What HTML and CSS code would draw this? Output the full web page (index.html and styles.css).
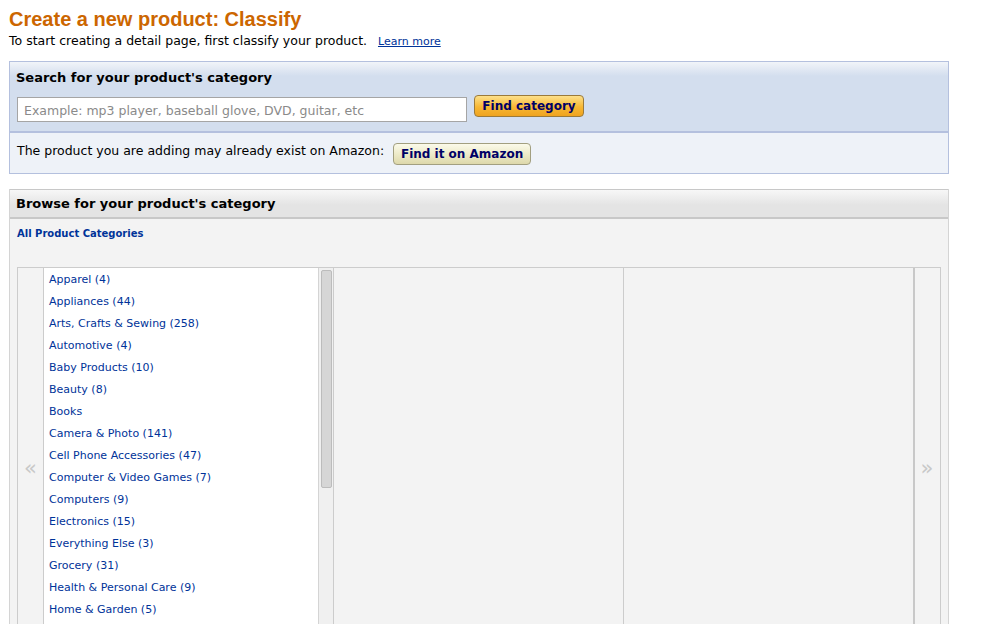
FILE: index.html
```html
<!DOCTYPE html>
<html lang="en">
<head>
    <meta charset="UTF-8">
    <title>Create a new product: Classify</title>
    <link rel="stylesheet" href="styles.css">
</head>
<body>
    <header class="page-head">
        <h1>Create a new product: Classify</h1>
        <p class="intro">To start creating a detail page, first classify your product. <a href="#" class="learn-more">Learn more</a></p>
    </header>

    <!-- Search panel -->
    <section class="search-box">
        <div class="search-top">
            <h2>Search for your product's category</h2>
            <form class="search-row">
                <input type="text" class="search-input" placeholder="Example: mp3 player, baseball glove, DVD, guitar, etc">
                <button type="button" class="btn btn-orange">Find category</button>
            </form>
        </div>
        <div class="search-bottom">
            <span>The product you are adding may already exist on Amazon:</span>
            <button type="button" class="btn btn-beige">Find it on Amazon</button>
        </div>
    </section>

    <!-- Browse panel -->
    <section class="browse-box">
        <div class="browse-head">
            <h2>Browse for your product's category</h2>
        </div>
        <div class="browse-body">
            <a href="#" class="all-link">All Product Categories</a>

            <div class="columns">
                <div class="arrow">&laquo;</div>
                <div class="column column-first">
                    <ul class="cat-list">
                        <li><a href="#">Apparel (4)</a></li>
                        <li><a href="#">Appliances (44)</a></li>
                        <li><a href="#">Arts, Crafts &amp; Sewing (258)</a></li>
                        <li><a href="#">Automotive (4)</a></li>
                        <li><a href="#">Baby Products (10)</a></li>
                        <li><a href="#">Beauty (8)</a></li>
                        <li><a href="#">Books</a></li>
                        <li><a href="#">Camera &amp; Photo (141)</a></li>
                        <li><a href="#">Cell Phone Accessories (47)</a></li>
                        <li><a href="#">Computer &amp; Video Games (7)</a></li>
                        <li><a href="#">Computers (9)</a></li>
                        <li><a href="#">Electronics (15)</a></li>
                        <li><a href="#">Everything Else (3)</a></li>
                        <li><a href="#">Grocery (31)</a></li>
                        <li><a href="#">Health &amp; Personal Care (9)</a></li>
                        <li><a href="#">Home &amp; Garden (5)</a></li>
                    </ul>
                    <div class="scrollbar"><div class="thumb"></div></div>
                </div>
                <div class="column"></div>
                <div class="column column-last"></div>
                <div class="arrow arrow-right">&raquo;</div>
            </div>
        </div>
    </section>
</body>
</html>
```

FILE: styles.css
```css
/* Reset */
html {
    overflow: hidden;
}

body, h1, h2, p, ul {
    margin: 0;
    padding: 0;
}

body {
    font-family: "DejaVu Sans", Verdana, sans-serif;
    color: #000;
    background-color: #fff;
    padding: 8px 45px 0 9px;
}

a {
    color: #003399;
    text-decoration: none;
}

/* Page heading */
.page-head h1 {
    font-family: "Liberation Sans", Arial, sans-serif;
    font-size: 20px;
    line-height: 22px;
    color: #cc6600;
}

.intro {
    font-size: 12.5px;
    line-height: 16px;
    margin-top: 3px;
    margin-bottom: 11px;
}

.learn-more {
    font-size: 11px;
    margin-left: 7px;
    text-decoration: underline;
}

/* Search panel */
.search-box {
    border: 1px solid #b4c0de;
    margin-bottom: 15px;
}

.search-top {
    background: linear-gradient(#f1f4f9 0, #d3deee 14px, #d3deee 100%);
    border-bottom: 2px solid #b4c0de;
    padding: 8px 7px 7px 6px;
    height: 54px;
}

.search-top h2,
.browse-head h2 {
    font-size: 13px;
    line-height: 16px;
}

.search-row {
    display: flex;
    align-items: flex-start;
    margin-top: 9px;
}

.search-input {
    width: 450px;
    height: 25px;
    box-sizing: border-box;
    border: 1px solid #a5a5a5;
    font-family: Tahoma, "DejaVu Sans", sans-serif;
    font-size: 12.5px;
    padding: 2px 6px 0;
    margin: 2px 7px 0 1px;
}

.search-input::placeholder {
    color: #8a8a8a;
}

.btn {
    font-family: "DejaVu Sans", Verdana, sans-serif;
    font-weight: bold;
    font-size: 12px;
    color: #000066;
    border-radius: 4px;
    height: 22px;
    padding: 0;
    white-space: nowrap;
    cursor: pointer;
}

.btn-orange {
    background: linear-gradient(#fde08a, #f7b733 55%, #efa31f);
    border: 1px solid #9b7a3a;
    width: 110px;
}

.btn-beige {
    background: linear-gradient(#fbfaea, #ece9c6 55%, #ddd8ab);
    border: 1px solid #a29f80;
    width: 138px;
}

.search-bottom {
    display: flex;
    align-items: flex-start;
    background-color: #eef2f8;
    padding: 9px 7px 8px 7px;
    height: 23px;
    font-size: 12.5px;
}

.search-bottom span {
    line-height: 18px;
    margin-right: 9px;
}

.search-bottom .btn {
    margin-top: 1px;
}

/* Browse panel */
.browse-box {
    border: 1px solid #d4d4d4;
    border-bottom: none;
}

.browse-head {
    background: linear-gradient(#f7f7f7 0, #e4e4e4 15px, #e4e4e4 100%);
    border-top: 1px solid #c8c8c8;
    border-bottom: 2px solid #c8c8c8;
    margin-top: -1px;
    padding: 6px 6px 5px;
}

.browse-body {
    background-color: #f3f3f3;
    padding: 8px 7px 0 7px;
}

.all-link {
    display: block;
    font-size: 10px;
    font-weight: bold;
    line-height: 14px;
    margin-bottom: 26px;
}

.columns {
    display: flex;
    height: 404px;
    border: 1px solid #cccccc;
    border-bottom: none;
}

.arrow {
    width: 25px;
    border-right: 1px solid #cccccc;
    display: flex;
    align-items: center;
    justify-content: center;
    font-size: 21px;
    color: #c8c8c8;
    padding-bottom: 4px;
}

.arrow-right {
    border-right: none;
    border-left: 2px solid #c8c8c8;
    width: 24px;
}

.column {
    width: 289px;
    border-right: 1px solid #cccccc;
}

.column-last {
    border-right: none;
}

.column-first {
    display: flex;
    width: 289px;
}

.cat-list {
    list-style: none;
    flex: 1;
    background-color: #fff;
    border-right: 1px solid #d4d4d4;
    overflow: hidden;
    padding: 1px 0 0 5px;
}

.cat-list li {
    font-size: 11px;
    line-height: 22px;
    white-space: nowrap;
}

/* Fake scrollbar for the first column */
.scrollbar {
    width: 14px;
    background-color: #f0f0f0;
    padding-top: 2px;
}

.thumb {
    width: 9px;
    height: 216px;
    margin-left: 2px;
    background-color: #d6d6d6;
    border: 1px solid #bcbcbc;
    border-radius: 2px;
}
```
